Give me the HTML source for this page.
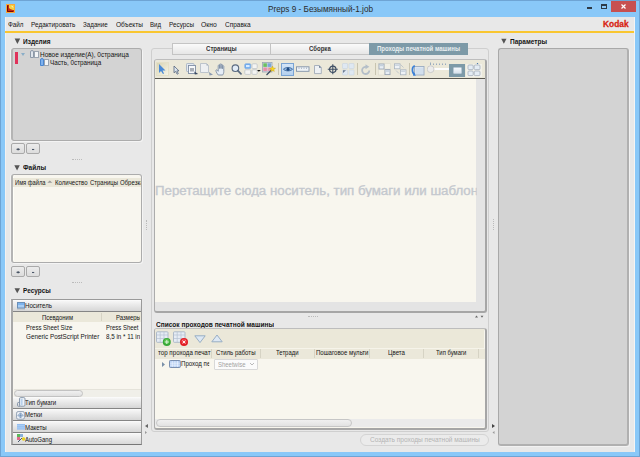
<!DOCTYPE html>
<html><head><meta charset="utf-8">
<style>
*{box-sizing:border-box;margin:0;padding:0}
html,body{width:640px;height:457px;overflow:hidden;background:#89c8f8;font-family:"Liberation Sans",sans-serif;color:#222;position:relative}
.a{position:absolute}
.t{position:absolute;white-space:nowrap;transform-origin:0 0}
.btn{position:absolute;border:1px solid #a9a9a9;border-radius:2px;background:linear-gradient(#ececec,#dcdcdc)}
.acc{position:absolute;left:0;width:129px;height:12px;background:linear-gradient(#f6f6f6,#d6d6d6);border-bottom:1px solid #858585;border-top:1px solid #fafafa}
</style></head><body>
<!-- window -->
<div class="a" style="left:0;top:0;width:640px;height:457px;border:1px solid #6ea4d4"></div>
<svg class="a" style="left:6px;top:4px" width="9" height="9"><rect x="0.5" y="0.5" width="8" height="8" fill="#e8a020" stroke="#f8a838"/><rect x="1" y="1" width="7" height="7" fill="#c62810"/><path d="M3 1H8V6C6.5 6 4.5 5.5 3 4Z" fill="#f4d040"/><path d="M5 1.5Q7.5 2 7.5 4L6 3Z" fill="#fff8d0"/><path d="M1.5 1.5V7.5H7" fill="none" stroke="#700808" stroke-width="1"/></svg>
<div class="a" style="left:587px;top:7px;width:5px;height:2px;background:#2e3a46"></div>
<div class="a" style="left:601px;top:4px;width:6px;height:5px;border:1px solid #2e3a46;border-top-width:2px"></div>
<div class="a" style="left:611px;top:1px;width:25px;height:11px;background:#c75050"></div>
<svg class="a" style="left:621px;top:4px" width="5" height="5"><path d="M0.5 0.5L4.5 4.5M4.5 0.5L0.5 4.5" stroke="#fff" stroke-width="1.2"/></svg>
<!-- client -->
<div class="a" style="left:5px;top:17px;width:630px;height:435px;background:#e8e8e8"></div>
<div class="a" style="left:5px;top:17px;width:1px;height:435px;background:#f2f2f2"></div>
<div class="a" style="left:5px;top:31px;width:630px;height:2px;background:#f9c630"></div>

<!-- LEFT: Изделия -->
<svg class="a" style="left:14px;top:38px" width="8" height="8"><path d="M0.6 0.6H6.2L3.4 5.9Z" fill="#555"/></svg>
<div class="a" style="left:11px;top:48px;width:131px;height:93px;background:#d3d3d3;border:1px solid #acacac;border-left:2px solid #b4b4b4;border-radius:3px;box-shadow:-1px 0 0 #f2f2f2,1px 1px 0 #f4f4f4"></div>
<div class="a" style="left:15px;top:52px;width:3px;height:12px;background:#e0325a"></div>
<svg class="a" style="left:21px;top:53px" width="4" height="3"><path d="M0 0H4L2 3Z" fill="#8aaec8"/></svg>
<svg class="a" style="left:30px;top:50px" width="9" height="8"><path d="M0.5 7.5V2Q0.5 0.5 2 0.5Q3.5 0.5 3.5 2V7.5Z" fill="#dfe5ec" stroke="#8c99a8"/><rect x="4.5" y="1.5" width="4" height="6" fill="#f4f6f8" stroke="#9aa4b0"/></svg>
<svg class="a" style="left:40px;top:58px" width="9" height="8"><path d="M0.5 7.5V2Q0.5 0.5 2 0.5Q3.5 0.5 3.5 2V7.5Z" fill="#7fb2ee" stroke="#4a86d0"/><rect x="4.5" y="1.5" width="4" height="6" fill="#f4f6f8" stroke="#9aa4b0"/></svg>
<div class="btn" style="left:11px;top:143px;width:14px;height:11px"></div>
<div class="btn" style="left:26px;top:143px;width:14px;height:11px"></div>
<svg class="a" style="left:16px;top:147px" width="20" height="5"><path d="M0.5 2.3H3.8M2.1 1.2V3.4" stroke="#3a4658" stroke-width="1"/><path d="M16 2.5H18.2" stroke="#4a5668" stroke-width="1.1"/></svg>
<!-- Файлы -->
<svg class="a" style="left:14px;top:165px" width="8" height="8"><path d="M0.3 0.2H5.8L3.05 5.4Z" fill="#555"/></svg>
<div class="a" style="left:11px;top:174px;width:131px;height:89px;background:#f8f6ef;border:1px solid #acacac;border-left:2px solid #b4b4b4;border-radius:3px;overflow:hidden;box-shadow:-1px 0 0 #f2f2f2,1px 1px 0 #f4f4f4,inset 1px 0 0 #fffff8">
  <div class="a" style="left:0;top:3px;width:129px;height:9px;background:#ebe8da"></div>
</div>
<svg class="a" style="left:47px;top:180px" width="6" height="4"><path d="M0.3 2.8L2.8 0.6L5.3 2.8Z" fill="#9a9a9a"/></svg>
<div class="btn" style="left:11px;top:266px;width:14px;height:11px"></div>
<div class="btn" style="left:26px;top:266px;width:14px;height:11px"></div>
<svg class="a" style="left:16px;top:270px" width="20" height="5"><path d="M0.5 2.3H3.8M2.1 1.2V3.4" stroke="#3a4658" stroke-width="1"/><path d="M16 2.5H18.2" stroke="#4a5668" stroke-width="1.1"/></svg>
<!-- splitter dots -->
<div class="a" style="left:72px;top:159px;width:10px;height:1px;border-top:1px dotted #bbb"></div>
<div class="a" style="left:72px;top:282px;width:10px;height:1px;border-top:1px dotted #bbb"></div>
<!-- Ресурсы -->
<svg class="a" style="left:14px;top:288px" width="8" height="8"><path d="M0.5 0.2H6L3.25 5.2Z" fill="#555"/></svg>
<div class="a" style="left:11px;top:299px;width:131px;height:146px;background:#f8f6ef;border:1px solid #9a9a9a;border-left:2px solid #a8a8a8;border-bottom-color:#777;overflow:hidden;box-shadow:-1px 0 0 #f2f2f2">
  <div class="acc" style="top:0"></div>
  <div class="a" style="left:0;top:12px;width:129px;height:10px;background:#ebe8da"></div>
  <div class="a" style="left:88px;top:13px;width:1px;height:8px;background:#d6d3c4"></div>
  <div class="a" style="left:1px;top:89px;width:127px;height:8px;background:#f0efe9;border-top:1px solid #e5e3da"></div>
  <div class="a" style="left:1px;top:90px;width:69px;height:7px;background:linear-gradient(#f0f0f0,#e0e0e0);border:1px solid #c2c2c2;border-radius:4px"></div>
  <div class="acc" style="top:97px"></div>
  <div class="acc" style="top:109px"></div>
  <div class="acc" style="top:121px"></div>
  <div class="acc" style="top:133px;border-bottom:none"></div>
</div>
<svg class="a" style="left:17px;top:302px" width="8" height="8"><rect x="0.5" y="0.5" width="7" height="5.5" fill="#a8cdf4" stroke="#6a8fb8"/><rect x="1" y="1" width="6" height="2" fill="#7db4ee"/><path d="M1 6.5V7.5M3 6.5V7.5M5 6.5V7.5M7 6.5V7.5" stroke="#6a7f98" stroke-width="0.8"/></svg>
<svg class="a" style="left:17px;top:397px" width="9" height="10"><rect x="2.5" y="0.6" width="5.5" height="8.6" rx="1.2" fill="#eef3f8" stroke="#7f90a6" stroke-width="0.9"/><rect x="3.6" y="1.8" width="2" height="6.4" fill="#b8d0ec"/><path d="M2.6 5.5H1.2Q0.5 5.5 0.5 6.5V8.5Q0.5 9.3 1.5 9.3H3" fill="none" stroke="#7f90a6" stroke-width="0.9"/></svg>
<svg class="a" style="left:16px;top:411px" width="9" height="9"><rect x="0.6" y="0.6" width="7.8" height="7.6" rx="1.5" fill="#eef2f8" stroke="#8a9aae" stroke-width="0.9"/><path d="M4.5 1.8L7 4.4L4.5 7L2 4.4Z" fill="#c4d8f0" stroke="#5a7aa0" stroke-width="0.6"/><path d="M4.5 2.5V6.3M2.7 4.4H6.3" stroke="#5a7aa0" stroke-width="0.5"/></svg>
<svg class="a" style="left:17px;top:424px" width="8" height="6"><rect x="0" y="0" width="8" height="5.5" fill="#a8ccf4"/><path d="M0 0.5H8M0 2.7H8M0 5H8" stroke="#8cb8ee" stroke-width="0.7"/></svg>
<svg class="a" style="left:17px;top:434px" width="9" height="8"><rect x="0" y="0" width="3" height="3" fill="#5cb85c"/><rect x="0" y="3" width="3" height="3" fill="#e06a8a"/><rect x="3" y="0" width="3" height="3" fill="#8ab0d8"/><circle cx="6.5" cy="5" r="1.8" fill="#e8d020"/><path d="M1 8L5 4" stroke="#4a5a70" stroke-width="1"/></svg>
<!-- left splitter -->

<svg class="a" style="left:145px;top:424px" width="3" height="4"><path d="M3 0V4L0 2Z" fill="#666"/></svg>
<svg class="a" style="left:145px;top:431px" width="3" height="4"><path d="M0 0V3L2 1.5Z" fill="#999"/></svg>

<!-- CENTER -->
<div class="a" style="left:151px;top:48px;width:338px;height:384px;border:1px solid #cfcfcf;border-radius:3px"></div>
<div class="a" style="left:172px;top:43px;width:296px;height:12px;background:linear-gradient(#fafafa,#e6e6e6);border:1px solid #c4c4c4"></div>
<div class="a" style="left:270px;top:44px;width:1px;height:10px;background:#c4c4c4"></div>
<div class="a" style="left:369px;top:43px;width:99px;height:12px;background:#7d9aa8"></div>
<div class="a" style="left:154px;top:59px;width:333px;height:254px;background:#e4e4e4;border:1px solid #bdbdbd;border-left-color:#acacac;border-right:2px solid #a6a6a6;border-bottom:2px solid #a6a6a6;border-radius:3px;overflow:hidden">
  <div class="a" style="left:0;top:0;width:330px;height:19px;background:#ebe8d9;border-bottom:1px solid #5a5850"></div>
  <div class="a" style="left:0;top:19px;width:321px;height:223px;background:#f8f6ee"></div>
</div>
<!-- toolbar icons -->
<div class="a" style="left:156px;top:62px;width:13px;height:14px;background:linear-gradient(135deg,#d8d4b4,#f6f4e6);border:1px solid #e4e0c8"></div>
<svg class="a" style="left:158px;top:64px" width="8" height="10"><path d="M1 0V9L3 7L5 10L6 9.4L4.5 6.5H7.5Z" fill="#4a8ad8"/></svg>
<svg class="a" style="left:173px;top:65px" width="8" height="10"><path d="M1 1V7.8L2.6 6.4L4.2 9.2L5.3 8.6L3.8 5.9H6Z" fill="#dde6f0" stroke="#55657c" stroke-width="0.8" stroke-linejoin="round"/></svg>
<svg class="a" style="left:186px;top:63px" width="13" height="12"><rect x="0.5" y="0.5" width="7.5" height="8" rx="0.8" fill="#e4eaf2" stroke="#a8b4c4" stroke-width="0.9"/><rect x="2.5" y="2.5" width="7" height="8" fill="#f6f8fa" stroke="#7f8ea4" stroke-width="0.9"/><path d="M5 5V8.5M7 5V8.5" stroke="#4a5668" stroke-width="0.9"/><path d="M8.3 8.6L12.2 11L8.8 11.4Z" fill="#3a4a62"/></svg>
<svg class="a" style="left:200px;top:63px" width="14" height="13"><path d="M0.5 0.5H6.5L8.5 2.5V9.5H0.5Z" fill="#eef0f2" stroke="#b8c0c8" stroke-width="0.9"/><path d="M6.5 0.5V2.5H8.5Z" fill="#9aa6b4"/><path d="M9 9L13 11.8L9.5 12.4Z" fill="#8a9ab0"/></svg>
<svg class="a" style="left:215px;top:63px" width="12" height="13"><path d="M3.2 12C1.2 9.5 0.6 7.5 1 7C1.8 6.4 2.8 7.5 3.2 8.3V2.8C3.2 1.8 4.6 1.8 4.6 2.8V5.5V1.6C4.6 0.6 6 0.6 6 1.6V5.5V2C6 1 7.4 1 7.4 2V5.8V3.4C7.4 2.4 8.8 2.4 8.8 3.4V8.5C8.8 10.5 8 11.2 7.8 12Z" fill="#e6edf6" stroke="#7f8ea4" stroke-width="0.9"/></svg>
<svg class="a" style="left:231px;top:64px" width="11" height="11"><circle cx="4.4" cy="4.2" r="3.3" fill="#e2ecf6" stroke="#5a6a80" stroke-width="1.1"/><path d="M6.8 6.6L10 9.8" stroke="#5a6a80" stroke-width="1.7" stroke-linecap="round"/></svg>
<svg class="a" style="left:244px;top:63px" width="17" height="12"><rect x="0.8" y="0.8" width="6" height="4.8" rx="1" fill="#6aa8ee" stroke="#8ab4e4" stroke-width="0.9"/><rect x="2" y="2" width="3.6" height="2.2" fill="#d8ecff"/><rect x="8" y="0.8" width="5.2" height="4.8" rx="1" fill="#f4f4f2" stroke="#c4c8cc" stroke-width="0.9"/><rect x="0.8" y="6.8" width="6" height="4.6" rx="1" fill="#f4f4f2" stroke="#c4c8cc" stroke-width="0.9"/><rect x="8" y="6.8" width="5.2" height="4.6" rx="1" fill="#f4f4f2" stroke="#c4c8cc" stroke-width="0.9"/><path d="M13 7H16.8L14.9 8.8Z" fill="#111"/></svg>
<svg class="a" style="left:262px;top:62px" width="14" height="14"><rect x="0.5" y="0.5" width="9.5" height="9.5" fill="#d4dce6" stroke="#9aa6b4" stroke-width="0.8"/><rect x="1.3" y="1.3" width="3.6" height="3.6" fill="#6cc060"/><rect x="5.5" y="1.3" width="3.6" height="3.6" fill="#7aa8d8"/><rect x="1.3" y="5.5" width="3.6" height="3.6" fill="#e890a8"/><rect x="5.5" y="5.5" width="3.6" height="3.6" fill="#e8a0b0"/><path d="M4.5 13L10.5 7" stroke="#3a4a60" stroke-width="1.2"/><path d="M10.5 4L11.3 6L13.5 6.3L11.8 7.5L12.3 9.5L10.5 8.4L8.7 9.5L9.2 7.5L7.5 6.3L9.7 6Z" fill="#f8d820" stroke="#c8a010" stroke-width="0.4"/></svg>
<div class="a" style="left:278px;top:63px;width:1px;height:12px;background:#c8c4b0"></div>
<div class="a" style="left:281px;top:63px;width:13px;height:13px;background:linear-gradient(#d4e6f8,#b4d0ee);border:1px solid #7aa4d4"></div>
<svg class="a" style="left:283px;top:66px" width="10" height="7"><path d="M0.5 3.2C2.5 1 7.5 1 9.5 3.2C7.5 5.4 2.5 5.4 0.5 3.2Z" fill="#9cc0e8" stroke="#2c5a92" stroke-width="0.9"/><circle cx="5" cy="3.2" r="1.5" fill="#1e4a80"/></svg>
<svg class="a" style="left:296px;top:66px" width="14" height="7"><rect x="0.5" y="0.8" width="12.5" height="4.5" fill="#eef2f6" stroke="#8092a8" stroke-width="0.9"/><path d="M3 1.5V3M5.5 1.5V3M8 1.5V3M10.5 1.5V3" stroke="#9aa8b8" stroke-width="0.7"/></svg>
<svg class="a" style="left:314px;top:65px" width="8" height="10"><path d="M0.5 0.5H5.3L7.3 2.5V8.6H0.5Z" fill="#eef1f4" stroke="#a0aab8" stroke-width="0.9"/><path d="M5 0.5V2.8H7.3Z" fill="#6a7a90"/></svg>
<svg class="a" style="left:327px;top:64px" width="12" height="11"><circle cx="5.8" cy="5.3" r="3.2" fill="none" stroke="#3e4e64" stroke-width="1.2"/><path d="M5.8 0.3V10.3M0.8 5.3H10.8" stroke="#3e4e64" stroke-width="1.1"/></svg>
<svg class="a" style="left:342px;top:63px" width="13" height="13"><rect x="0.5" y="0.5" width="5" height="5" rx="0.6" fill="#dfe8f2" stroke="#c8d4e0" stroke-width="0.6"/><rect x="7" y="0.5" width="5" height="5" rx="0.6" fill="#dfe8f2" stroke="#c8d4e0" stroke-width="0.6"/><rect x="0.5" y="7" width="5" height="5" rx="0.6" fill="#dfe8f2" stroke="#c8d4e0" stroke-width="0.6"/><rect x="7" y="7" width="5" height="5" rx="0.6" fill="#dfe8f2" stroke="#c8d4e0" stroke-width="0.6"/><path d="M1 7.2H4L1 10Z" fill="#6a7a90"/></svg>
<div class="a" style="left:357px;top:63px;width:1px;height:12px;background:#c8c4b0"></div>
<svg class="a" style="left:361px;top:64px" width="11" height="12"><path d="M8.3 6.5A3.6 3.6 0 1 1 5 2.8" fill="none" stroke="#b4bec8" stroke-width="1.8"/><path d="M4.5 0.2L8.3 2.8L4.5 5.2Z" fill="#b4bec8"/></svg>
<div class="a" style="left:375px;top:63px;width:1px;height:12px;background:#c8c4b0"></div>
<svg class="a" style="left:378px;top:63px" width="13" height="13"><rect x="0.5" y="0.5" width="12" height="11.5" fill="#f2f0e4" stroke="#dcdacc" stroke-width="0.6"/><path d="M6.5 0.5V12M0.5 6.2H12.5" stroke="#dcdacc" stroke-width="0.6"/><rect x="1" y="1" width="5" height="5" fill="#e8eef4" stroke="#98a4b4" stroke-width="0.8"/><rect x="1.6" y="1.6" width="3.8" height="1.6" fill="#c4d0dc"/><rect x="7" y="6.6" width="5" height="5" fill="#e8eef4" stroke="#98a4b4" stroke-width="0.8"/><rect x="7.6" y="7.2" width="3.8" height="1.6" fill="#c4d0dc"/></svg>
<svg class="a" style="left:394px;top:63px" width="13" height="13"><rect x="0.5" y="0.8" width="5.5" height="5" fill="#eef2f6" stroke="#a8b4c0" stroke-width="0.8"/><rect x="1.1" y="1.4" width="4.3" height="1.6" fill="#ccd6e0"/><rect x="6.5" y="6.8" width="5.5" height="5" fill="#eef2f6" stroke="#a8b4c0" stroke-width="0.8"/><rect x="7.1" y="7.4" width="4.3" height="1.6" fill="#ccd6e0"/><path d="M6.5 1.5L9.5 4.5M2 7.5L5 10.5" stroke="#b0bac4" stroke-width="0.7"/></svg>
<div class="a" style="left:409px;top:63px;width:1px;height:12px;background:#c8c4b0"></div>
<svg class="a" style="left:411px;top:65px" width="14" height="11"><rect x="3.5" y="1.5" width="9.5" height="8.5" fill="#dbe6f2" stroke="#9aacc0" stroke-width="0.9"/><path d="M5 4H12M5 6H12M5 8H12" stroke="#c0d0e0" stroke-width="0.6"/><path d="M3.8 0.8C0.6 1.8 0.6 7.8 3.8 9.6" fill="none" stroke="#3a80d8" stroke-width="1.7"/><path d="M2.5 7.8L5 10.5L2 10.8Z" fill="#3a80d8"/></svg>
<svg class="a" style="left:427px;top:62px" width="22" height="12"><path d="M3.5 0.5V3M6.5 1.5V3M9.5 1.5V3M12.5 1.5V3M15.5 1.5V3M18.5 1.5V3" stroke="#8ea4bc" stroke-width="0.9"/><rect x="6" y="6" width="16" height="2" fill="#fdfdfd"/><circle cx="3.6" cy="7.2" r="3.4" fill="#ececec" stroke="#c4c4c4" stroke-width="0.8"/></svg>
<div class="a" style="left:449px;top:64px;width:16px;height:13px;background:#7d9aa8"></div>
<div class="a" style="left:453px;top:67px;width:9px;height:7px;background:linear-gradient(#f4f8fc,#d8e2ec);border:1px solid #b8c8d4;border-radius:1px"></div>
<div class="a" style="left:466px;top:64px;width:16px;height:13px;background:#f2f1ea"></div>
<svg class="a" style="left:467px;top:63px" width="15" height="14"><circle cx="10.5" cy="0.6" r="0.7" fill="#4a7ab0"/><rect x="1" y="2" width="5.2" height="4.6" rx="1" fill="#e4ecf4" stroke="#a4b0bc" stroke-width="0.8"/><rect x="7.2" y="2" width="5.8" height="4.6" rx="1" fill="#e4ecf4" stroke="#a4b0bc" stroke-width="0.8"/><rect x="1" y="8" width="5.2" height="4.6" rx="1" fill="#e4ecf4" stroke="#a4b0bc" stroke-width="0.8"/><rect x="7.2" y="8" width="5.8" height="4.6" rx="1" fill="#e4ecf4" stroke="#a4b0bc" stroke-width="0.8"/></svg>
<!-- canvas splitter -->
<div class="a" style="left:146px;top:220px;width:1px;height:10px;border-left:1px dotted #bbb"></div>
<div class="a" style="left:493px;top:219px;width:1px;height:11px;border-left:1px dotted #bbb"></div>
<div class="a" style="left:308px;top:316px;width:10px;height:1px;border-top:1px dotted #bbb"></div>
<svg class="a" style="left:475px;top:315px" width="9" height="4"><path d="M0 2.6L1.5 0.6L3 2.6ZM5.6 0.8H8.4L7 2.8Z" fill="#666"/></svg>

<!-- bottom list -->
<div class="a" style="left:154px;top:328px;width:333px;height:102px;background:#f8f6ee;border:1px solid #bdbdbd;border-left-color:#acacac;border-right:2px solid #a6a6a6;border-bottom:2px solid #a6a6a6;border-radius:3px;overflow:hidden">
  <div class="a" style="left:0;top:0;width:329px;height:19px;background:#ebe8d9"></div>
  <div class="a" style="left:0;top:19px;width:330px;height:11px;background:#ebe8da;border-top:1px solid #f6f4ea"></div>
  <div class="a" style="left:56px;top:20px;width:1px;height:9px;background:#d6d3c4"></div>
  <div class="a" style="left:105px;top:20px;width:1px;height:9px;background:#d6d3c4"></div>
  <div class="a" style="left:159px;top:20px;width:1px;height:9px;background:#d6d3c4"></div>
  <div class="a" style="left:214px;top:20px;width:1px;height:9px;background:#d6d3c4"></div>
  <div class="a" style="left:268px;top:20px;width:1px;height:9px;background:#d6d3c4"></div>
  <div class="a" style="left:323px;top:20px;width:1px;height:9px;background:#d6d3c4"></div>
  <div class="a" style="left:0;top:90px;width:330px;height:8px;background:#ebebeb"></div>
  <div class="a" style="left:1px;top:90px;width:196px;height:8px;background:linear-gradient(#f0f0f0,#e2e2e2);border:1px solid #c6c6c6;border-radius:4px"></div>
</div>
<svg class="a" style="left:156px;top:331px" width="16" height="16"><rect x="0.5" y="0.8" width="11.5" height="10.5" rx="0.8" fill="#e6ecf4" stroke="#a8b6c6" stroke-width="0.9"/><path d="M4.2 1V11M8 1V11M1 4H12M1 7.5H12" stroke="#b4c2d2" stroke-width="0.7"/><circle cx="10.8" cy="11" r="4" fill="#38a838"/><circle cx="10.8" cy="10.3" r="2.6" fill="#5cc450"/><path d="M8.8 11H12.8M10.8 9V13" stroke="#e8f8e8" stroke-width="0.9"/></svg>
<svg class="a" style="left:173px;top:331px" width="16" height="16"><rect x="0.5" y="0.8" width="11.5" height="10.5" rx="0.8" fill="#e6ecf4" stroke="#a8b6c6" stroke-width="0.9"/><path d="M4.2 1V11M8 1V11M1 4H12M1 7.5H12" stroke="#b4c2d2" stroke-width="0.7"/><circle cx="11" cy="11" r="4" fill="#e01c24"/><circle cx="11" cy="10.3" r="2.6" fill="#f04048"/><path d="M9.6 9.6L12.4 12.4M12.4 9.6L9.6 12.4" stroke="#fff" stroke-width="0.9"/></svg>
<svg class="a" style="left:194px;top:335px" width="12" height="9"><path d="M0.8 0.8H11.2L6 7.6Z" fill="#dde8f4" stroke="#98aec4" stroke-width="1"/></svg>
<svg class="a" style="left:211px;top:334px" width="12" height="9"><path d="M0.8 7.8H11.2L6 1Z" fill="#dde8f4" stroke="#98aec4" stroke-width="1"/></svg>
<svg class="a" style="left:162px;top:362px" width="3" height="5"><path d="M0 0L3 2.5L0 5Z" fill="#7a90a8"/></svg>
<svg class="a" style="left:169px;top:360px" width="12" height="8"><rect x="0.5" y="0.5" width="10.8" height="7" rx="0.8" fill="#b8d0f4" stroke="#6f86a8" stroke-width="0.9"/><path d="M3.3 1V7M5.9 1V7M8.5 1V7M1 3.2H11M1 5.2H11" stroke="#f4f8ff" stroke-width="0.6"/></svg>
<div class="a" style="left:214px;top:359px;width:44px;height:11px;background:#fbfbfb;border:1px solid #d8d8d8;border-radius:1px"></div>
<svg class="a" style="left:250px;top:363px" width="4" height="3"><path d="M0 0L2 2L4 0" fill="none" stroke="#aaa" stroke-width="0.8"/></svg>
<!-- frame lines -->


<div class="a" style="left:360px;top:434px;width:129px;height:12px;border:1px solid #d4d4d4;border-radius:6px;background:#ebebeb"></div>
<svg class="a" style="left:492px;top:424px" width="3" height="4"><path d="M0 0V4L3 2Z" fill="#444"/></svg>
<svg class="a" style="left:492px;top:431px" width="3" height="4"><path d="M2.5 0V3L0.5 1.5Z" fill="#999"/></svg>

<!-- RIGHT -->
<svg class="a" style="left:501px;top:38px" width="8" height="8"><path d="M0.25 0.75H5.5L2.87 5.8Z" fill="#555"/></svg>
<div class="a" style="left:498px;top:48px;width:131px;height:398px;background:#d3d3d3;border:1px solid #a9a9a9;border-right:2px solid #b0b0b0;border-bottom:2px solid #b0b0b0;border-radius:3px;box-shadow:1px 1px 0 #f2f2f2"></div>
<div class="a" style="left:634px;top:17px;width:1px;height:435px;background:#f4f4f4"></div>
<div class="t" id="t0" style="left:8.25px;top:20.73px;font-size:8px;line-height:8px;color:#141414;transform:scaleX(0.7879);">Файл</div>
<div class="t" id="t1" style="left:31.25px;top:20.73px;font-size:8px;line-height:8px;color:#141414;transform:scaleX(0.8007);">Редактировать</div>
<div class="t" id="t2" style="left:83.25px;top:20.73px;font-size:8px;line-height:8px;color:#141414;transform:scaleX(0.7799);">Задание</div>
<div class="t" id="t3" style="left:115.50px;top:20.73px;font-size:8px;line-height:8px;color:#141414;transform:scaleX(0.8182);">Объекты</div>
<div class="t" id="t4" style="left:150.00px;top:20.73px;font-size:8px;line-height:8px;color:#141414;transform:scaleX(0.7594);">Вид</div>
<div class="t" id="t5" style="left:168.75px;top:20.73px;font-size:8px;line-height:8px;color:#141414;transform:scaleX(0.7925);">Ресурсы</div>
<div class="t" id="t6" style="left:201.25px;top:20.73px;font-size:8px;line-height:8px;color:#141414;transform:scaleX(0.8471);">Окно</div>
<div class="t" id="t7" style="left:224.50px;top:20.73px;font-size:8px;line-height:8px;color:#141414;transform:scaleX(0.8123);">Справка</div>
<div class="t" id="t8" style="left:267.50px;top:3.96px;font-size:9.5px;line-height:9.5px;color:#2b2b2b;transform:scaleX(0.8624);">Preps 9 - Безымянный-1.job</div>
<div class="t" id="t9" style="left:602.60px;top:19.51px;font-size:9.2px;line-height:9.2px;color:#d81e10;font-weight:bold;transform:scaleX(0.9112);-webkit-text-stroke:0.3px #d81e10;">Kodak</div>
<div class="t" id="t10" style="left:23.25px;top:37.73px;font-size:8px;line-height:8px;color:#141414;font-weight:bold;transform:scaleX(0.8107);">Изделия</div>
<div class="t" id="t11" style="left:23.25px;top:164.43px;font-size:8px;line-height:8px;color:#141414;font-weight:bold;transform:scaleX(0.8182);">Файлы</div>
<div class="t" id="t12" style="left:23.20px;top:286.93px;font-size:8px;line-height:8px;color:#141414;font-weight:bold;transform:scaleX(0.8069);">Ресурсы</div>
<div class="t" id="t13" style="left:510.00px;top:37.93px;font-size:8px;line-height:8px;color:#141414;font-weight:bold;transform:scaleX(0.8143);">Параметры</div>
<div class="t" id="t14" style="left:156.25px;top:321.03px;font-size:8px;line-height:8px;color:#141414;font-weight:bold;transform:scaleX(0.8188);height:7px;overflow:hidden;">Список проходов печатной машины</div>
<div class="t" id="t15" style="left:206.00px;top:45.32px;font-size:7px;line-height:7px;color:#333;font-weight:bold;transform:scaleX(0.8670);">Страницы</div>
<div class="t" id="t16" style="left:308.75px;top:45.32px;font-size:7px;line-height:7px;color:#333;font-weight:bold;transform:scaleX(0.8614);">Сборка</div>
<div class="t" id="t17" style="left:377.00px;top:45.32px;font-size:7px;line-height:7px;color:#e8eef0;font-weight:bold;transform:scaleX(0.8548);">Проходы печатной машины</div>
<div class="t" id="t18" style="left:40.00px;top:50.73px;font-size:8px;line-height:8px;color:#141414;transform:scaleX(0.8072);">Новое изделие(A), 0страница</div>
<div class="t" id="t19" style="left:50.00px;top:58.98px;font-size:8px;line-height:8px;color:#141414;transform:scaleX(0.7885);">Часть, 0страница</div>
<div class="t" id="t20" style="left:14.50px;top:178.65px;font-size:7.5px;line-height:7.5px;color:#141414;transform:scaleX(0.7667);">Имя файла</div>
<div class="t" id="t21" style="left:55.00px;top:178.65px;font-size:7.5px;line-height:7.5px;color:#141414;transform:scaleX(0.8068);">Количество</div>
<div class="t" id="t22" style="left:89.50px;top:178.65px;font-size:7.5px;line-height:7.5px;color:#141414;transform:scaleX(0.7950);">Страницы</div>
<div class="t" id="t23" style="left:119.50px;top:178.65px;font-size:7.5px;line-height:7.5px;color:#141414;transform:scaleX(0.8000);width:25.62px;overflow:hidden;">Обрезка</div>
<div class="t" id="t24" style="left:25.00px;top:301.85px;font-size:7.5px;line-height:7.5px;color:#141414;transform:scaleX(0.8159);">Носитель</div>
<div class="t" id="t25" style="left:42.00px;top:313.65px;font-size:7.5px;line-height:7.5px;color:#141414;transform:scaleX(0.7898);">Псевдоним</div>
<div class="t" id="t26" style="left:115.50px;top:313.65px;font-size:7.5px;line-height:7.5px;color:#141414;transform:scaleX(0.8000);width:29.75px;overflow:hidden;">Размеры</div>
<div class="t" id="t27" style="left:25.50px;top:323.93px;font-size:8px;line-height:8px;color:#141414;transform:scaleX(0.7536);">Press Sheet Size</div>
<div class="t" id="t28" style="left:105.50px;top:323.93px;font-size:8px;line-height:8px;color:#141414;transform:scaleX(0.7458);">Press Sheet</div>
<div class="t" id="t29" style="left:25.50px;top:332.73px;font-size:8px;line-height:8px;color:#141414;transform:scaleX(0.7920);">Generic PostScript Printer</div>
<div class="t" id="t30" style="left:105.50px;top:332.73px;font-size:8px;line-height:8px;color:#141414;transform:scaleX(0.7800);width:43.59px;overflow:hidden;">8,5 in * 11 in</div>
<div class="t" id="t31" style="left:25.00px;top:399.15px;font-size:7.5px;line-height:7.5px;color:#141414;transform:scaleX(0.8087);">Тип бумаги</div>
<div class="t" id="t32" style="left:25.00px;top:411.15px;font-size:7.5px;line-height:7.5px;color:#141414;transform:scaleX(0.8030);">Метки</div>
<div class="t" id="t33" style="left:25.00px;top:423.65px;font-size:7.5px;line-height:7.5px;color:#141414;transform:scaleX(0.8169);">Макеты</div>
<div class="t" id="t34" style="left:25.00px;top:435.55px;font-size:7.5px;line-height:7.5px;color:#141414;transform:scaleX(0.7993);">AutoGang</div>
<div class="t" id="t35" style="left:157.50px;top:349.15px;font-size:7.5px;line-height:7.5px;color:#141414;transform:scaleX(0.8237);">тор прохода печат</div>
<div class="t" id="t36" style="left:215.50px;top:349.15px;font-size:7.5px;line-height:7.5px;color:#141414;transform:scaleX(0.8079);">Стиль работы</div>
<div class="t" id="t37" style="left:276.25px;top:349.15px;font-size:7.5px;line-height:7.5px;color:#141414;transform:scaleX(0.7912);">Тетради</div>
<div class="t" id="t38" style="left:315.50px;top:349.15px;font-size:7.5px;line-height:7.5px;color:#141414;transform:scaleX(0.8081);">Пошаговое мульти</div>
<div class="t" id="t39" style="left:388.00px;top:349.15px;font-size:7.5px;line-height:7.5px;color:#141414;transform:scaleX(0.8132);">Цвета</div>
<div class="t" id="t40" style="left:436.25px;top:349.15px;font-size:7.5px;line-height:7.5px;color:#141414;transform:scaleX(0.7854);">Тип бумаги</div>
<div class="t" id="t41" style="left:180.50px;top:360.43px;font-size:8px;line-height:8px;color:#141414;transform:scaleX(0.7635);width:37px;overflow:hidden;">Проход пе</div>
<div class="t" id="t42" style="left:217.50px;top:360.85px;font-size:7.5px;line-height:7.5px;color:#a2a2a2;transform:scaleX(0.7946);">Sheetwise</div>
<div class="t" id="t43" style="left:369.50px;top:436.15px;font-size:7.5px;line-height:7.5px;color:#b4b4b4;transform:scaleX(0.8750);">Создать проходы печатной машины</div>
<div class="t" id="t44" style="left:155.00px;top:184.84px;font-size:12px;line-height:12px;color:#c4c8ce;transform:scaleX(1.1054);width:290.67px;overflow:hidden;-webkit-text-stroke:0.35px #c4c8ce;">Перетащите сюда носитель, тип бумаги или шаблон</div>
</body></html>
